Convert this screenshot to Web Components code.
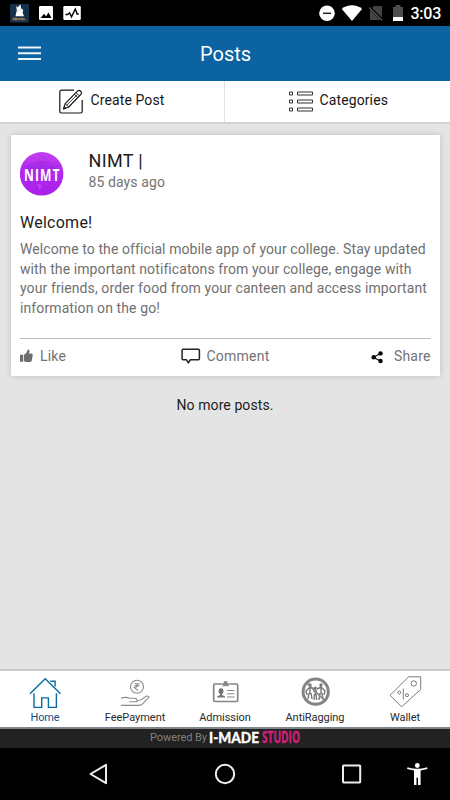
<!DOCTYPE html>
<html lang="en">
<head>
<meta charset="utf-8">
<title>Posts</title>
<style>
html,body{margin:0;height:100%;background:#000}
body{font-family:Roboto,"Noto Sans",sans-serif;color:#1c1c1c;overflow:hidden}
</style>
</head>
<body>
<college-app></college-app>
<script>
const define = (name, html, setup) => customElements.define(name, class extends HTMLElement {
  connectedCallback() {
    if (this.shadowRoot) return;
    const t = document.createElement('template');
    t.innerHTML = html;
    this.attachShadow({mode: 'open'}).append(t.content.cloneNode(true));
    if (setup) setup(this);
  }
});

/* One line of text tracked to a given advance width. */
define('tracked-text', `<style>:host{display:block;white-space:nowrap;flex:none}span{display:inline-block}</style><span><slot></slot></span>`, el => {
  const span = el.shadowRoot.querySelector('span');
  const w = +el.getAttribute('w');
  const n = el.textContent.length;
  const natural = span.getBoundingClientRect().width;
  if (w && natural) { span.style.letterSpacing = ((w - natural) / n).toFixed(3) + 'px'; el.style.width = w + 'px'; }
});

define('status-bar', `<style>
:host{display:flex;height:26px;background:#000;box-sizing:border-box;color:#fff}
svg{display:block;flex:none}
tracked-text{font:500 16px/28px Roboto,sans-serif;padding-left:.5px;height:26px}
</style>
<svg width="410" height="26" viewBox="0 0 410 26">
<rect x="10" y="4" width="19" height="18.5" fill="#14304a"/>
<path d="M15.5 16.2l1.3-6-.7-4.4 1.5 1.7 2.7-3.2.8 4 2.2 1.7-.7 2.5 1.4 3.7z" fill="#fff"/><path d="M17.5 11l1-1M20.2 9l1 .5" stroke="#8995a0" stroke-width=".8"/>
<path d="M13 20.3v-2.2h1.4v2.2m1.1 0v-2.2h1.2v2.2m1.2 0v-2.2l1 1.5 1-1.5v2.2m1.4 0v-2.2h1.3v2.2m1.2 0v-2.2l1.8 2.2" fill="none" stroke="#b5854e" stroke-width=".9"/>
<rect x="39" y="6" width="14" height="14" rx="1.2" fill="#fff"/><path d="M40.7 18l3.3-4.3 2 2.5 2.5-3.7 3 5.5z"/>
<rect x="63.3" y="6" width="17.5" height="14" rx="1.2" fill="#fff"/><path d="M65.4 14.5h2.3l1.8-1.7 2 4 3.8-7.8 1.8 5h1.7" fill="none" stroke="#000" stroke-width="1.4"/>
<circle cx="327" cy="13.3" r="7.8" fill="#fff"/><path d="M323 13.3h8" stroke="#222" stroke-width="1.5"/>
<path d="M341.8 9C347 4.1 357 4.1 362 9L352 21z" fill="#fff"/>
<path d="M374 6h8v14h-12V10z" fill="#434343"/><path d="M368.8 6.8l14 13.7" stroke="#000" stroke-width="3"/><path d="M369 7.5l13.2 13" stroke="#555" stroke-width="1.3"/>
<path d="M393 7h2.5V5h5v2h2.5v10h-10z" fill="#4d4d4d"/><path d="M393 17h10v4h-10z" fill="#fff"/>
</svg><tracked-text w="30.5">3:03</tracked-text>`);

define('app-header', `<style>
:host{display:grid;grid-template-columns:1fr auto 1fr;height:55px;background:#0b63a1;color:#fff;align-items:center}
svg{display:block;margin-left:18px}
tracked-text{font:400 20px/57px Roboto,sans-serif;height:55px}
</style><svg width="24" height="15" viewBox="0 0 24 15" stroke="#eef5fa" stroke-width="2"><path d="M0 1.5h23M0 7.3h23M0 13h23"/></svg>
<tracked-text w="50"><slot></slot></tracked-text>`);

define('action-tabs', `<style>
:host{display:flex;height:43px;background:#fff;box-sizing:border-box;border-bottom:2px solid #d2d2d2}
div{display:flex;width:225px;box-sizing:border-box}
.create{border-right:1px solid #e2e2e2;padding-left:59px}
.categories{padding-left:63px}
svg{display:block;margin-top:8px}
.categories svg{margin-top:7px}
tracked-text{font-size:14px;line-height:39px;margin-left:6.5px;color:#161616}
</style>
<div class="create"><svg width="25" height="25" viewBox="0 0 25 25" fill="none" stroke="#141414" stroke-width="1.2" stroke-linejoin="round"><path d="M15 1.2H2.5Q.8 1.2.8 2.7v19.6q0 1.7 1.7 1.7h19q1.7 0 1.7-1.7V11"/><path d="M4.5 20l1.7-5.4L18.7 1.9q1.5-1 3 .3t.4 2.9L9.7 18z"/><path d="M6.2 14.6l3.5 3.4M17 3.6l3.5 3.3M15.4 5.4l3.4 3.3M7.7 16.3L18.5 5.4M4.5 20l2.6-.8-1.6-1.7z" stroke-width=".8"/></svg><tracked-text w="74">Create Post</tracked-text></div>
<div class="categories"><svg width="25" height="25" viewBox="0 0 25 25" fill="none" stroke="#333" stroke-width="1"><path d="M1.5 4h3v3h-3zM1.5 12h3v3h-3zM1.5 20h3v3h-3zM9.5 4h15v3h-15zM9.5 12h15v3h-15zM9.5 20h15v3h-15z"/></svg><tracked-text w="68.5">Categories</tracked-text></div>`);

define('post-avatar', `<style>
:host{display:grid;width:44px;height:44px;flex:none}
svg,tracked-text{grid-area:1/1;display:block}
tracked-text{font:700 15.5px/46px "Open Sans","Noto Sans",sans-serif;color:#fff;margin-left:4.2px;height:44px;transform:scaleX(.78);transform-origin:0 0}
</style><svg width="44" height="44" viewBox="0 0 44 44"><defs><linearGradient id="g" x2="0" y2="1"><stop stop-color="#c140f0"/><stop offset=".35" stop-color="#b52ef0"/><stop offset="1" stop-color="#a91ee8"/></linearGradient><clipPath id="c"><circle cx="21.6" cy="21.8" r="21.8"/></clipPath></defs>
<g clip-path="url(#c)"><path fill="url(#g)" d="M0 0h44v44H0z"/><path d="M2 17L20 9l20 8-14 6v8q-5-5-11-2v-6z" fill="#7d1acb" opacity=".25"/><path d="M18 2q16 8 20 28M3 15Q20 5 39 14" stroke="#8c1fd2" opacity=".3" fill="none"/><path d="M17 32l5 1-2 5z" fill="#d966ff" opacity=".5"/></g></svg><tracked-text w="38">NIMT</tracked-text>`);

define('post-card', `<style>
:host{display:block;margin:11px 10.5px 0 11px;height:241px;background:#fff;box-sizing:border-box;padding:16.5px 9px 0;box-shadow:0 0 6px rgba(0,0,0,.16)}
header{display:flex;height:62.5px;gap:24.5px}
.name{font-size:18px;line-height:18px;padding-bottom:1px}.age{font-size:14px;line-height:23px;color:#747474}
.title{font-size:16px;line-height:18px}
.body{color:#707070;font-size:14px;line-height:19.75px;padding-top:7.8px;height:104.5px;box-sizing:border-box}
footer{display:grid;grid-template-columns:1fr auto 1fr;border-top:1px solid #bcbcbc;font-size:14px;line-height:35px;color:#727272;margin-top:1.5px}
footer div{display:flex}.share{justify-content:flex-end}
svg{display:block}
</style>
<header><post-avatar></post-avatar><div><tracked-text class="name" w="54.5">NIMT |</tracked-text><tracked-text class="age" w="76.5">85 days ago</tracked-text></div></header>
<tracked-text class="title" w="72.5">Welcome!</tracked-text>
<div class="body"><tracked-text w="404.5">Welcome to the official mobile app of your college. Stay updated</tracked-text><tracked-text w="391">with the important notificatons from your college, engage with</tracked-text><tracked-text w="407">your friends, order food from your canteen and access important</tracked-text><tracked-text w="140">information on the go!</tracked-text></div>
<footer>
<div><svg width="20" height="30" viewBox="0 0 20 30"><path d="M0 15.8h3.2v7H0zM4 16l2.6-2.4 1-2.7q.7-.8 1.5-.1.9 1-.1 3.6h2.6q1.5.3 1.1 1.9l-1 5.5q-.4 1.2-1.7 1.2H6l-2-.8z" fill="#6d6d6d"/></svg><tracked-text w="26">Like</tracked-text></div>
<div><svg width="25.5" height="30" viewBox="0 0 25.5 30"><path d="M1.8 10.2h15.3q1 0 1 1v8.6q0 1-1 1h-8L7 23.8l-1.8-3H1.8q-1 0-1-1v-8.6q0-1 1-1z" transform="translate(.3)" fill="none" stroke="#222" stroke-width="1.5" stroke-linejoin="round"/></svg><tracked-text w="63">Comment</tracked-text></div>
<div class="share"><svg width="23.5" height="30" viewBox="0 0 23.5 30"><path d="M9.5 14.4L2.5 18.2l7 4" fill="none" stroke="#111" stroke-width="1.1"/><g fill="#050505"><circle cx="9.5" cy="14.4" r="2.2"/><circle cx="2.7" cy="18.2" r="2.2"/><circle cx="9.5" cy="22" r="2.2"/></g></svg><tracked-text w="36.5">Share</tracked-text></div>
</footer>`);

define('tab-item', `<style>
:host{display:flex;flex-direction:column;align-items:center;width:90px;color:#2a2a2a}
:host([active]){color:#124f87}
::slotted(svg){display:block;width:50px;height:38px}
tracked-text{font-size:11px;line-height:18px}
</style><slot name="icon"></slot><tracked-text></tracked-text>`, el => {
  const old = el.shadowRoot.querySelector('tracked-text');
  const label = document.createElement('tracked-text');
  label.setAttribute('w', el.getAttribute('w'));
  label.textContent = el.getAttribute('label');
  old.replaceWith(label);
});

define('tab-bar', `<style>
:host{display:flex;height:60px;background:#fff;border-top:2px solid #cacaca;border-bottom:2px solid #7f868c;box-sizing:border-box}
</style>
<tab-item active label="Home" w="29"><svg slot="icon" viewBox="0 0 50 38" fill="none" stroke="#0b6c9e" stroke-width="1.4"><path d="M10 22.8L25.2 7.8l15.3 15M14 22.2v14.2h7.7V26.9h6.7v9.5h8V22.2M30.3 10.3h4.8v5.2"/></svg></tab-item>
<tab-item label="FeePayment" w="60.5"><svg slot="icon" viewBox="0 0 50 38" fill="none" stroke="#8b8b8b" stroke-width="1.1"><circle cx="27" cy="15.8" r="6.5"/><path d="M24.4 12.8h5.2M24.4 14.8h5.2M24.4 12.8h2q3 2.8-2 3.7l3.6 3.2"/><path d="M11 27.3q5-1.8 8 0h5.3q3 0 2.8 3.4h-8m8-1.5l3.6-.2 6-4q1.9-.2 2.3 1.2l-6.7 6.9q-1 1.2-3.3 1.3H11"/></svg></tab-item>
<tab-item label="Admission" w="51.5"><svg slot="icon" viewBox="0 0 50 38" fill="none" stroke="#858585"><rect x="13.7" y="13" width="24" height="17.5" rx="1.3" stroke-width="1.7"/><path d="M22.3 15.3V12h1.4v-2h3.8v2h1.4v3.3z" fill="#858585" stroke="#fff" stroke-width=".4"/><g fill="#737373" stroke="none"><ellipse cx="21" cy="20.3" rx="2.4" ry="3"/><path d="M17.2 26.5v-1.2l3-1.4v-1.4h1.8v1.4l3 1.4v1.2z"/></g><path d="M27 19.5h7.5M27 22.8h7.5M27 26h7.5" stroke-width="1"/></svg></tab-item>
<tab-item label="AntiRagging" w="59"><svg slot="icon" viewBox="0 0 50 38"><circle cx="25.7" cy="20.7" r="12.6" fill="none" stroke="#848484" stroke-width="3"/><g fill="#777"><circle cx="20" cy="14" r="1.7"/><circle cx="25.3" cy="17" r="1.6"/><circle cx="31" cy="14" r="1.7"/></g><g stroke="#777" stroke-width="1.4" fill="none"><path d="M20 15v8M20 16l-4 4 1 4M20 16l4 2M19 22l-1 6M21 22l1 6M25.3 18v6M23 20h4M24.5 23l-.5 6M26 23l.7 6M31 15v8M31 16l-4 2M31 16l4 4-1 4M30 22l-1 7M32 22l1 6"/></g><path d="M16.5 11.5l18 18" stroke="#848484" stroke-width="1.7"/></svg></tab-item>
<tab-item label="Wallet" w="30"><svg slot="icon" viewBox="0 0 50 38" fill="none" stroke="#7c7c7c" stroke-width="1"><path d="M10 24.3L28.7 5.8h12v12.7L21.6 35.8z"/><circle cx="33.8" cy="12.5" r="2.7"/><circle cx="19.3" cy="21.5" r="1.5"/><circle cx="27" cy="24.2" r="1.5"/><path d="M23.3 17.5v11"/></svg></tab-item>`);

define('powered-bar', `<style>
:host{display:flex;height:19px;background:#222;padding-left:150px;box-sizing:border-box;color:#808080}
.by{font-size:11px;line-height:17px}
.logo{margin-left:2px;overflow:visible;display:block}
</style><tracked-text class="by" w="57">Powered By</tracked-text>
<svg class="logo" width="98" height="19" viewBox="0 0 98 19"><text x="0" y="13.7" font-family="Lato" font-weight="900" font-size="15" fill="#fff" stroke="#fff" stroke-width=".3" textLength="50" lengthAdjust="spacingAndGlyphs">I-MADE</text><text transform="translate(53 14) scale(.66 1)" font-family="Open Sans" font-weight="700" font-size="15.5" fill="#d3217b" stroke="#d3217b" stroke-width=".3" textLength="57.5" lengthAdjust="spacingAndGlyphs">STUDIO</text></svg>`);

define('system-nav', `<style>:host{display:block;height:52px;background:#000}svg{display:block}</style>
<svg width="450" height="52" viewBox="0 0 450 52" fill="none" stroke="#eee" stroke-width="2" stroke-linejoin="round"><path d="M106 16.8v18.4L90.5 26z"/><circle cx="225" cy="26" r="9.2"/><rect x="343" y="17.4" width="17.2" height="17" rx=".6"/><g fill="#fff" stroke="none"><circle cx="417.3" cy="17.5" r="2.4"/><path d="M407.5 19.2q9.7 3 19.6 0l.4 1.8-6.9 1.4V37H418v-7.2h-1.5V37H414V22.4l-6.9-1.4z"/></g></svg>`);

define('college-app', `<style>
:host{display:flex;flex-direction:column;width:450px;height:800px}
main{flex:1;background:#e4e4e4;display:flex;flex-direction:column}
main>tracked-text{font-size:14px;line-height:20px;margin:19px auto 0}
</style>
<status-bar></status-bar><app-header>Posts</app-header><action-tabs></action-tabs>
<main><post-card></post-card><tracked-text w="97">No more posts.</tracked-text></main>
<tab-bar></tab-bar><powered-bar></powered-bar><system-nav></system-nav>`);
</script>
</body>
</html>
